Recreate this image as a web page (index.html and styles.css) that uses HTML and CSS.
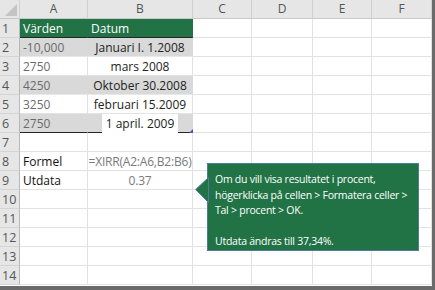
FILE: index.html
```html
<!DOCTYPE html>
<html lang="sv">
<head>
<meta charset="utf-8">
<link rel="stylesheet" href="styles.css">
</head>
<body>
<div class="sheet">
  <div class="grid">
    <div class="corner"><span class="tri"></span></div>
    <div class="colh">A</div><div class="colh">B</div><div class="colh">C</div><div class="colh">D</div><div class="colh">E</div><div class="colh">F</div>

    <div class="rowh">1</div>
    <div class="c head ul">Värden</div><div class="c head ul">Datum</div><div class="c"></div><div class="c"></div><div class="c"></div><div class="c"></div>

    <div class="rowh">2</div>
    <div class="c gray num">-10,000</div><div class="c gray ctr">Januari I. 1.2008</div><div class="c"></div><div class="c"></div><div class="c"></div><div class="c"></div>

    <div class="rowh">3</div>
    <div class="c num">2750</div><div class="c ctr">mars 2008</div><div class="c"></div><div class="c"></div><div class="c"></div><div class="c"></div>

    <div class="rowh">4</div>
    <div class="c gray num">4250</div><div class="c gray ctr">Oktober 30.2008</div><div class="c"></div><div class="c"></div><div class="c"></div><div class="c"></div>

    <div class="rowh">5</div>
    <div class="c num">3250</div><div class="c ctr">februari 15.2009</div><div class="c"></div><div class="c"></div><div class="c"></div><div class="c"></div>

    <div class="rowh">6</div>
    <div class="c gray num ul">2750</div><div class="c gray ctr ul last"><span class="wbox">1 april. 2009</span><span class="handle"></span></div><div class="c"></div><div class="c"></div><div class="c"></div><div class="c"></div>

    <div class="rowh">7</div>
    <div class="c"></div><div class="c"></div><div class="c"></div><div class="c"></div><div class="c"></div><div class="c"></div>

    <div class="rowh">8</div>
    <div class="c txt">Formel</div><div class="c ctr gtxt">=XIRR(A2:A6,B2:B6)</div><div class="c"></div><div class="c"></div><div class="c"></div><div class="c"></div>

    <div class="rowh">9</div>
    <div class="c txt">Utdata</div><div class="c ctr gtxt">0.37</div><div class="c"></div><div class="c"></div><div class="c"></div><div class="c"></div>

    <div class="rowh">10</div>
    <div class="c"></div><div class="c"></div><div class="c"></div><div class="c"></div><div class="c"></div><div class="c"></div>
    <div class="rowh">11</div>
    <div class="c"></div><div class="c"></div><div class="c"></div><div class="c"></div><div class="c"></div><div class="c"></div>
    <div class="rowh">12</div>
    <div class="c"></div><div class="c"></div><div class="c"></div><div class="c"></div><div class="c"></div><div class="c"></div>
    <div class="rowh">13</div>
    <div class="c"></div><div class="c"></div><div class="c"></div><div class="c"></div><div class="c"></div><div class="c"></div>
    <div class="rowh">14</div>
    <div class="c"></div><div class="c"></div><div class="c"></div><div class="c"></div><div class="c"></div><div class="c"></div>
  </div>

  <div class="callout">
    <svg class="pointer" width="14" height="27" viewBox="0 0 14 27">
      <polygon points="13.5,0.5 0.7,12.5 13.5,25.5" fill="#217346" stroke="#4f7aa3" stroke-width="1"/>
    </svg>
    <p class="ctext">Om du vill visa resultatet i procent,<br>högerklicka på cellen &gt; Formatera celler &gt;<br>Tal &gt; procent &gt; OK.<br><br>Utdata ändras till 37,34%.</p>
  </div>
</div>
</body>
</html>
```

FILE: styles.css
```css
html, body {
  margin: 0;
  padding: 0;
  background: #ffffff;
}

.sheet {
  position: relative;
  width: 432px;
  height: 286px;
  border-right: 3px solid #6b6b6b;
  border-bottom: 4px solid #6b6b6b;
  overflow: hidden;
  font-family: "Open Sans", "Noto Sans", sans-serif;
  font-size: 12px;
}

.grid {
  display: grid;
  grid-template-columns: 20px 68px 105px 59px 61px 59px 60px;
  grid-auto-rows: 19px;
}

.corner {
  position: relative;
  background: #e6e6e6;
  border-right: 1px solid #d0d0d0;
  border-bottom: 1px solid #c8c8c8;
}

.tri {
  position: absolute;
  right: 2px;
  bottom: 2px;
  width: 0;
  height: 0;
  border-left: 12px solid transparent;
  border-bottom: 12px solid #c4c4c4;
}

.colh {
  background: #e6e6e6;
  color: #555555;
  text-align: center;
  line-height: 18px;
  border-right: 1px solid #d0d0d0;
  border-bottom: 1px solid #c8c8c8;
  font-size: 12px;
}

.rowh {
  background: #e6e6e6;
  color: #555555;
  padding-left: 2px;
  line-height: 19px;
  border-right: 1px solid #b8b8b8;
  border-bottom: 1px solid #d4d4d4;
  font-size: 12.5px;
}

.c {
  position: relative;
  box-sizing: border-box;
  border-right: 1px solid #e2e2e2;
  border-bottom: 1px solid #e2e2e2;
  line-height: 19px;
  white-space: nowrap;
  color: #222222;
}

.head {
  background: #217346;
  color: #ffffff;
  padding-left: 3px;
  border-right-color: #217346;
}

.ul {
  border-bottom: 1px solid #262626;
}

.gray {
  background: #d9d9d9;
  border-right-color: #d9d9d9;
  border-bottom-color: #e8e8e8;
}

.gray.ul {
  border-bottom-color: #262626;
}

.num {
  color: #6a6a6a;
  padding-left: 3px;
}

.ctr {
  text-align: center;
}

.txt {
  padding-left: 3px;
  color: #111111;
}

.gtxt {
  color: #7a7a7a;
  letter-spacing: -0.2px;
}

.last {
  overflow: visible;
}

.wbox {
  display: inline-block;
  background: #ffffff;
  padding: 0 4px;
  height: 19px;
  position: relative;
  z-index: 1;
}

.handle {
  position: absolute;
  right: -1px;
  bottom: -1px;
  width: 0;
  height: 0;
  border-left: 4px solid transparent;
  border-bottom: 4px solid #3c5fa8;
  z-index: 2;
}

.callout {
  position: absolute;
  left: 207px;
  top: 163px;
  width: 210px;
  height: 86px;
  background: #217346;
  border: 1px solid #4f7aa3;
}

.pointer {
  position: absolute;
  left: -13px;
  top: 13px;
}

.ctext {
  margin: 0;
  padding: 8px 0 0 7px;
  color: #ffffff;
  font-family: "Open Sans", "Noto Sans", sans-serif;
  font-size: 10.5px;
  line-height: 15.5px;
  letter-spacing: -0.25px;
  white-space: nowrap;
}
```
